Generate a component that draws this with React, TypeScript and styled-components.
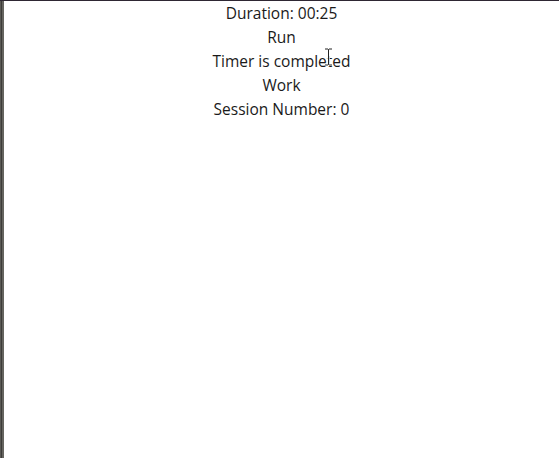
import React from "react";
import styled, { createGlobalStyle } from "styled-components";

const Global = createGlobalStyle`
  html, body {
    margin: 0;
    padding: 0;
    height: 100%;
    background: #ffffff;
  }
  #root {
    height: 100%;
  }
`;

const Frame = styled.div`
  display: flex;
  height: 458px;
  border-top: 1px solid #2e2733;
  box-sizing: border-box;
`;

const Edge = styled.div`
  width: 4px;
  flex-shrink: 0;
  background: linear-gradient(90deg, #5a5955 0%, #5a5955 25%, #3d3c39 25%, #3d3c39 50%, #65645f 50%, #65645f 100%);
`;

const Page = styled.main`
  position: relative;
  flex: 1;
  display: flex;
  flex-direction: column;
  align-items: center;
  background: #ffffff;
  font-family: "Open Sans", "DejaVu Sans", sans-serif;
  font-size: 15.5px;
  line-height: 24px;
  color: #1a1a1a;
`;

const Line = styled.div`
  text-align: center;
`;

const Cursor = styled.svg`
  position: absolute;
  left: 320px;
  top: 47px;
`;

export default function App() {
  return (
    <>
      <Global />
      <Frame>
        <Edge />
        <Page>
          <Line>Duration: 00:25</Line>
          <Line>Run</Line>
          <Line>Timer is completed</Line>
          <Line>Work</Line>
          <Line>Session Number: 0</Line>
          <Cursor width="9" height="18" viewBox="0 0 9 18">
            <path d="M1 1h3l0.5 0.5L5 1h3M4.5 1.5v15M1 17h3l0.5-0.5L5 17h3" stroke="#ffffff" strokeWidth="2.4" fill="none" />
            <path d="M1 1h3l0.5 0.5L5 1h3M4.5 1.5v15M1 17h3l0.5-0.5L5 17h3" stroke="#222222" strokeWidth="1" fill="none" />
          </Cursor>
        </Page>
      </Frame>
    </>
  );
}
